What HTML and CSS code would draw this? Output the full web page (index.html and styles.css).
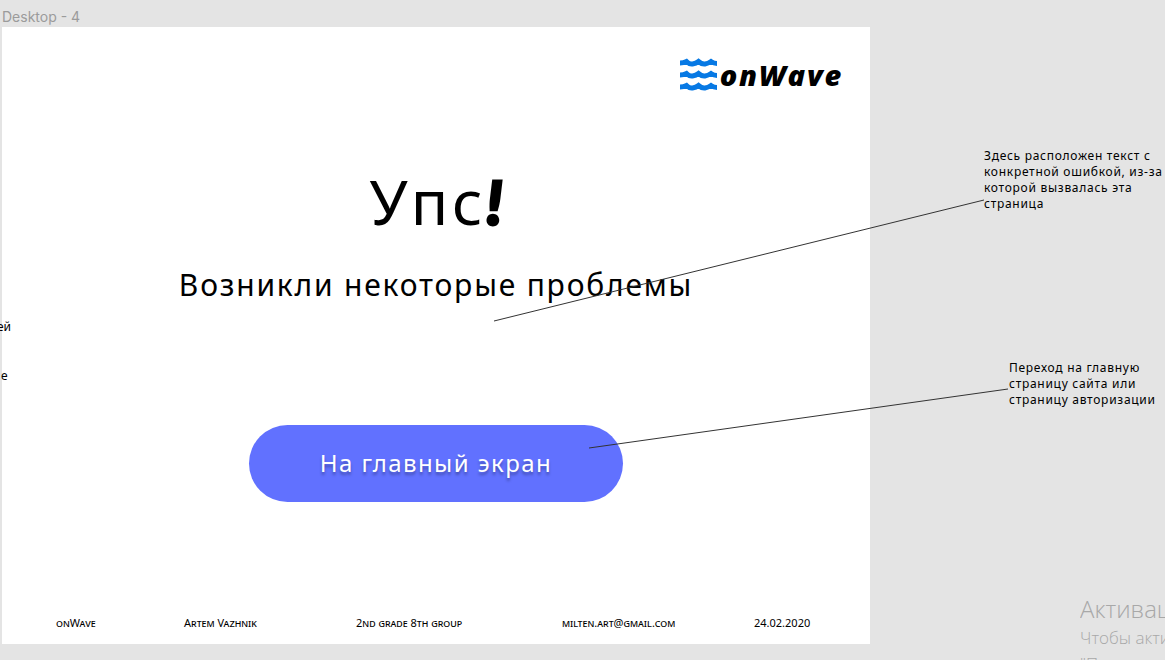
FILE: index.html
```html
<!DOCTYPE html>
<html lang="ru">
<head>
<meta charset="utf-8">
<title>onWave</title>
<link rel="stylesheet" href="styles.css">
</head>
<body>
<div class="canvas">
  <section class="artboard">
    <div class="frame-label">Desktop - 4</div>
    <main class="frame">
      <header class="brand">
        <svg class="waves" viewBox="0 0 37 32" aria-hidden="true">
          <path d="M0 4Q3.500 4 6.500 2.500Q9.500 5.500 12.500 5Q16 4.500 18.500 2.500Q22 5.500 25 5Q28 4.500 31 2.500Q34 4.500 37 4.500"/>
          <path d="M0 16Q3.500 16 6.500 14.500Q9.500 17.500 12.500 17Q16 16.500 18.500 14.500Q22 17.500 25 17Q28 16.500 31 14.500Q34 16.500 37 16.500"/>
          <path d="M0 28Q3.500 28 6.500 26.500Q9.500 29.500 12.500 29Q16 28.500 18.500 26.500Q22 29.500 25 29Q28 28.500 31 26.500Q34 28.500 37 28.500"/>
        </svg>
        <span class="brand-name">onWave</span>
      </header>
      <div class="message">
        <h1 class="title">Упс<span class="bang">!</span></h1>
        <p class="subtitle">Возникли некоторые проблемы</p>
        <button class="home" type="button">На главный экран</button>
      </div>
      <footer class="footer">
        <span>onWave</span>
        <span>Artem Vazhnik</span>
        <span>2nd grade 8th group</span>
        <span>milten.art@gmail.com</span>
        <span>24.02.2020</span>
      </footer>
    </main>
  </section>
  <aside class="notes">
    <p class="note note-error">Здесь расположен текст с<br>конкретной ошибкой, из-за<br>которой вызвалась эта<br>страница</p>
    <p class="note note-home">Переход на главную<br>страницу сайта или<br>страницу авторизации</p>
  </aside>
  <span class="stray stray-top">ей</span>
  <span class="stray stray-bottom">е</span>
  <svg class="connectors" width="520" height="300" viewBox="0 0 520 300" aria-hidden="true">
    <path d="M4 151L494 30M99 278L518 219"/>
  </svg>
  <div class="watermark">
    <div class="watermark-title">Активация</div>
    <div>Чтобы активи</div>
    <div>"Параметры"</div>
  </div>
</div>
</body>
</html>
```
FILE: styles.css
```css
* {
  box-sizing: border-box;
}

body {
  margin: 0;
  background: #e4e4e4;
  color: #000;
  font-family: "Noto Sans", "Open Sans", sans-serif;
}

.canvas {
  position: relative;
  display: grid;
  grid-template-columns: 1fr 295px;
  min-height: 100vh;
  padding-left: 2px;
  overflow: hidden;
}

.artboard {
  display: flex;
  flex-direction: column;
  padding: 6px 0 16px;
}

.frame-label {
  color: #9b9b9b;
  font: 14px/21px Inter, sans-serif;
}

.frame {
  flex: 1;
  display: flex;
  flex-direction: column;
  background: #fff;
}

.brand {
  display: flex;
  justify-content: flex-end;
  align-items: center;
  gap: 3px;
  padding: 30px 27px 0 0;
}

.waves {
  width: 37px;
  height: 36px;
  fill: none;
  stroke: #0779e4;
  stroke-width: 5;
}

.brand-name {
  font: italic 800 29px/36px "Open Sans", sans-serif;
  letter-spacing: 0.06em;
}

.message {
  display: flex;
  flex-direction: column;
  align-items: center;
}

.title {
  margin: 66px 0 0;
  font-size: 62px;
  font-weight: 400;
  line-height: 84px;
  letter-spacing: 0.06em;
}

.bang {
  font: italic 900 60px/84px Lato, sans-serif;
  letter-spacing: 0;
  -webkit-text-stroke: 3px #000;
}

.subtitle {
  margin: 20px 0 0;
  font-size: 30px;
  line-height: 42px;
  letter-spacing: 0.06em;
}

.home {
  width: 43%;
  margin-top: 119px;
  padding: 18px 0 20px;
  border: 0;
  border-radius: 39px;
  background: #6171ff;
  color: #fff;
  font: inherit;
  font-size: 24px;
  line-height: 39px;
  letter-spacing: 0.06em;
  text-shadow: 0 3px 3px rgba(0, 0, 0, 0.3);
}

.footer {
  display: grid;
  grid-template-columns: 128fr 172fr 206fr 192fr 116fr;
  margin-top: auto;
  padding: 0 0 12px 54px;
  font-size: 11px;
  line-height: 18px;
  font-variant: small-caps;
}

.notes {
  padding-top: 148px;
}

.note {
  margin: 0;
  font-size: 12px;
  line-height: 16px;
  letter-spacing: 0.06em;
  white-space: nowrap;
}

.note-error {
  padding-left: 114px;
}

.note-home {
  margin-top: 148px;
  padding-left: 139px;
}

.stray {
  position: absolute;
  font-size: 12px;
  line-height: 16px;
}

.stray-top {
  top: 319px;
  left: -3px;
}

.stray-bottom {
  top: 368px;
  left: 1px;
}

.connectors {
  position: absolute;
  top: 170px;
  right: 155px;
  fill: none;
  stroke: #333;
  stroke-width: 1;
}

.watermark {
  position: absolute;
  top: 593px;
  left: calc(100% - 85px);
  height: 67px;
  overflow: hidden;
  color: #a8a8a8;
  font: 300 17px/26px "Open Sans", sans-serif;
  white-space: nowrap;
}

.watermark-title {
  font-size: 24px;
  line-height: 32px;
}
```
